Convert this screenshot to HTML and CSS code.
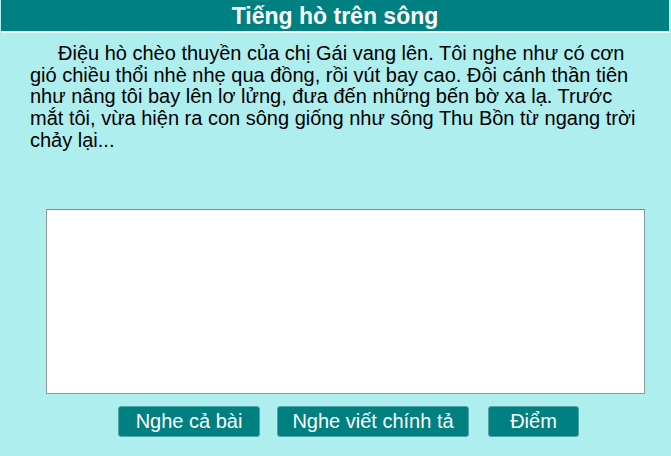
FILE: index.html
```html
<!DOCTYPE html>
<html lang="vi">
<head>
    <meta charset="UTF-8">
    <title>Tiếng hò trên sông</title>
    <link rel="stylesheet" href="styles.css">
</head>
<body>
    <header class="title-bar">Tiếng hò trên sông</header>
    <p class="passage">Điệu hò chèo thuyền của chị Gái vang lên. Tôi nghe như có cơn gió chiều thổi nhè nhẹ qua đồng, rồi vút bay cao. Đôi cánh thần tiên như nâng tôi bay lên lơ lửng, đưa đến những bến bờ xa lạ. Trước mắt tôi, vừa hiện ra con sông giống như sông Thu Bồn từ ngang trời chảy lại...</p>
    <div class="answer-box">
        <textarea class="answer" id="answer"></textarea>
    </div>
    <div class="button-row">
        <button class="button btn-listen">Nghe cả bài</button>
        <button class="button btn-dictate">Nghe viết chính tả</button>
        <button class="button btn-score">Điểm</button>
    </div>
</body>
</html>
```

FILE: styles.css
```css
body {
    font-family: "Liberation Sans", Arial, sans-serif;
    background-color: #afeeee;
    color: #000;
    margin: 0;
    padding: 0;
    width: 671px;
    height: 456px;
    overflow: hidden;
}
.title-bar {
    margin: 0 1px;
    height: 31px;
    line-height: 33px;
    background-color: #008080;
    border-right: 1px solid #e8f8f8;
    border-bottom: 2px solid #f2fbfb;
    color: #fff;
    font-size: 23px;
    font-weight: bold;
    text-align: center;
}
.passage {
    margin: 10px 0 0 30px;
    width: 614px;
    font-size: 20px;
    line-height: 21.7px;
    text-indent: 28px;
}
.answer-box {
    margin: 57px 0 0 46px;
}
.answer {
    display: block;
    box-sizing: border-box;
    width: 599px;
    height: 185px;
    margin: 0;
    border: 1px solid #8c9a9a;
    border-top-color: #7f8c8c;
    border-left-color: #909c9c;
    background-color: #fff;
    resize: none;
    outline: none;
}
.button-row {
    display: flex;
    margin: 12px 0 0 118px;
}
.button {
    box-sizing: border-box;
    height: 31px;
    padding: 0;
    margin-right: 17px;
    background-color: #008080;
    border: 1px solid #4fa6a6;
    border-radius: 3px;
    color: #fff;
    font-family: "Liberation Sans", Arial, sans-serif;
    font-size: 20px;
    cursor: pointer;
}
.btn-listen {
    width: 142px;
}
.btn-dictate {
    width: 192px;
    margin-right: 19px;
}
.btn-score {
    width: 91px;
}
```
